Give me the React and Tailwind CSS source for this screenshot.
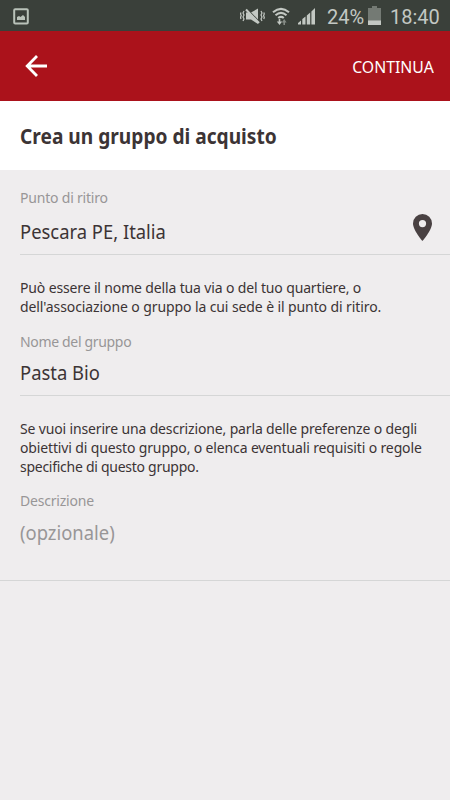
function StatusBar() {
  return (
    <div className="flex h-[31px] items-center bg-[#3a403a] pl-[13px] pr-[11px] text-[#c3c8c3]">
      <svg className="mt-px" width="16" height="17" viewBox="0 0 16 17" fill="none">
        <rect x="1.2" y="1.2" width="13.6" height="14.2" rx="1" stroke="#b9c2b9" strokeWidth="2" />
        <path d="M4 12V9l2-1 1.500 1L10 7l2 2v3z" fill="#b9c2b9" />
      </svg>
      <svg className="ml-auto mt-px" width="25" height="17" viewBox="0 0 25 17" fill="none">
        <path d="M6 4.500h5L18 .5v15.500l-7-4.500H6z" fill="#c3c8c3" />
        <path d="M7.500 1.500l11.500 12" stroke="#3a403a" strokeWidth="1.300" />
        <path d="M6 1.500l13 13.500" stroke="#c3c8c3" strokeWidth="2" />
        <path d="M4 3l-1 2 1 2-1 2 1 2-1 2M1 4.500l-.5 1.500.7 1.500-.7 2 .5 1.500M21 3l1 2-1 2 1 2-1 2 1 2M23.800 4.500l.5 1.500-.7 1.500.7 2-.5 1.500" stroke="#c3c8c3" strokeWidth="1.200" />
      </svg>
      <svg className="ml-[7px] mt-px" width="19" height="19" viewBox="0 0 19 19" fill="none">
        <path d="M1 5.200q8-6.800 16 0M3.500 8.300q5.500-4.700 11 0M6.200 11q2.800-2.300 5.600 0" stroke="#c3c8c3" strokeWidth="2.100" />
        <path d="M7.500 12v4" stroke="#c3c8c3" strokeWidth="1.600" />
        <path d="M4.800 14.500h5.400l-2.700 3.500z" fill="#c3c8c3" />
        <path d="M12.200 18v-4" stroke="#858b85" strokeWidth="1.600" />
        <path d="M9.800 15.500h4.800l-2.400-3.500z" fill="#858b85" />
      </svg>
      <svg className="ml-[7px] mt-px" width="17" height="17" viewBox="0 0 17 17" fill="#c3c8c3">
        <path d="M0 16.500v-1.500l3-2.500v4zM4.300 16.500v-5.500l3.200-2.500v8zM8.800 16.500v-9l3.400-3v12zM13.400 16.500V3.500L17 0v16.500z" />
      </svg>
      <span className="ml-[12px] mt-[2px] w-[37px] whitespace-nowrap font-[Roboto,sans-serif] text-[20px] leading-none">24%</span>
      <svg className="ml-[4px]" width="13" height="19" viewBox="0 0 13 19">
        <path d="M0 2h4V0h5v2h4v17H0z" fill="#747a74" />
        <path d="M0 14.500h13V19H0z" fill="#c3c8c3" />
      </svg>
      <span className="ml-[9px] mt-[2px] w-[49px] whitespace-nowrap font-[Roboto,sans-serif] text-[20px] leading-none">18:40</span>
    </div>
  );
}

function Header() {
  return (
    <header className="flex h-[70px] items-center justify-between bg-[#ab121b] pl-[25px] pr-4 text-white">
      <svg width="23" height="22" viewBox="0 0 23 22" fill="none" stroke="white" strokeWidth="2.800">
        <path d="M12 1L2.200 11l9.800 10M2.200 11H22" />
      </svg>
      <span className="origin-right scale-x-[0.93] text-[17px] leading-none">CONTINUA</span>
    </header>
  );
}

export default function App() {
  return (
    <div className="h-[800px] w-[450px] overflow-hidden bg-[#efedee] font-['Noto_Sans',sans-serif] text-[#3c3435]">
      <StatusBar />
      <Header />
      <div className="flex h-[69px] items-center bg-white pb-[2px] pl-5">
        <h1 className="origin-left scale-x-[0.87] whitespace-nowrap text-[22px] font-bold leading-none">Crea un gruppo di acquisto</h1>
      </div>

      <main className="flex flex-col whitespace-nowrap">
        <section className="ml-5 flex h-[85px] flex-col border-b border-[#d5d6d6] pt-[18px]">
          <Label className="tracking-[-0.2px]">Punto di ritiro</Label>
          <div className="mt-[7px] flex items-start justify-between pr-[18px]">
            <Value className="mt-[5px]">Pescara PE, Italia</Value>
            <svg width="19" height="27" viewBox="0 0 19 27" fill="#494142">
              <path fillRule="evenodd" d="M9.500 0A9.500 9.500 0 0 0 0 9.500C0 16 9.500 27 9.500 27S19 16 19 9.500A9.500 9.500 0 0 0 9.500 0m0 6a3.600 3.600 0 1 1 0 7.200a3.600 3.600 0 0 1 0-7.200" />
            </svg>
          </div>
        </section>

        <div className="ml-5 mt-[23px] text-[14px] leading-[19px]">
          <p className="tracking-[-0.145px]">Può essere il nome della tua via o del tuo quartiere, o</p>
          <p className="tracking-[-0.1px]">dell'associazione o gruppo la cui sede è il punto di ritiro.</p>
        </div>

        <section className="ml-5 mt-[16px] flex h-[64px] flex-col border-b border-[#d5d6d6]">
          <Label className="tracking-[-0.33px]">Nome del gruppo</Label>
          <Value className="mt-[9px]">Pasta Bio</Value>
        </section>

        <div className="ml-5 mt-[23px] text-[14px] leading-[19px]">
          <p className="tracking-[-0.15px]">Se vuoi inserire una descrizione, parla delle preferenze o degli</p>
          <p className="tracking-[-0.14px]">obiettivi di questo gruppo, o elenca eventuali requisiti o regole</p>
          <p className="tracking-[-0.27px]">specifiche di questo gruppo.</p>
        </div>

        <section className="mt-[15px] flex h-[90px] flex-col border-b border-[#d5d6d6] pl-5 text-[#989697]">
          <Label className="tracking-[-0.2px]">Descrizione</Label>
          <Value className="mt-[10px]">(opzionale)</Value>
        </section>
      </main>
    </div>
  );
}

function Label({ children, className = '' }) {
  return <span className={'text-[14px] leading-[19px] text-[#989697] ' + className}>{children}</span>;
}

function Value({ children, className = '' }) {
  return <span className={'block origin-left scale-x-[0.92] text-[20px] leading-[26px] ' + className}>{children}</span>;
}
